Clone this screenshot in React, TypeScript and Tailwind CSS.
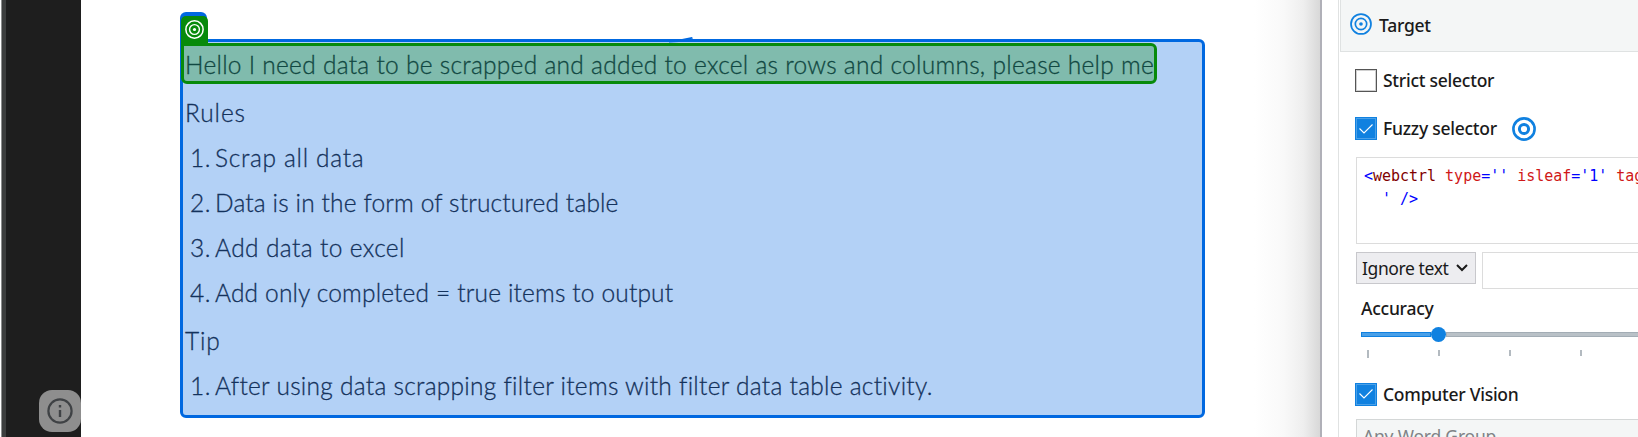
import React from "react";

function Bullseye({ className, dot }: { className: string; dot?: boolean }) {
  return (
    <svg viewBox="0 0 24 24" className={className} fill="none" stroke="currentColor">
      <circle cx="12" cy="12" r={dot ? 10.9 : 10.6} strokeWidth={dot ? 1.9 : 2.6} />
      {dot ? (
        <>
          <circle cx="12" cy="12" r="6.2" strokeWidth="1.8" />
          <circle cx="12" cy="12" r="2" fill="currentColor" stroke="none" />
        </>
      ) : (
        <circle cx="12" cy="12" r="4.6" strokeWidth="3" />
      )}
    </svg>
  );
}

function Check({ on }: { on?: boolean }) {
  if (!on) return <span className="h-[23px] w-[22px] shrink-0 border border-[#555] bg-white shadow-[inset_0_0_0_1px_#d0d0d0]" />;
  return (
    <span className="flex h-[23px] w-[22px] shrink-0 items-center justify-center border border-[#1081e0] bg-[#1081e0] shadow-[inset_0_0_0_1px_#4aa0e8]">
      <svg viewBox="0 0 14 10" className="h-[10px] w-[14px]" fill="none" stroke="white" strokeWidth="1.1">
        <path d="M0.5 4.5 L5 9 L13.5 0.5" />
      </svg>
    </span>
  );
}

const label = "whitespace-nowrap font-['Noto_Sans'] font-medium text-[17.5px] tracking-[-0.25px] text-[#1a1a1a]";

const rules = [
  { text: "Scrap all data", tracking: "tracking-[0.68px]" },
  { text: "Data is in the form of structured table", tracking: "tracking-[0.14px]" },
  { text: "Add data to excel", tracking: "tracking-[0.38px]" },
  { text: "Add only completed = true items to output", tracking: "tracking-[0.16px]" },
];

export default function App() {
  return (
    <div className="flex h-[437px] w-[1638px] overflow-hidden bg-white">
      <aside className="flex w-[81px] shrink-0 flex-col items-end justify-end border-l border-white bg-[#1e1e1e] pb-[5px] shadow-[inset_1px_0_0_#8c8e8e,inset_5px_0_0_#3c3e3e]">
        <span className="flex size-[42px] items-center justify-center rounded-[13px] bg-[#8e8e8e] text-[#3f4245]">
          <svg viewBox="0 0 26 26" className="size-[26px]" fill="none" stroke="currentColor" strokeWidth="2.2">
            <circle cx="13" cy="13" r="11.6" />
            <path d="M13 12v7M13 7v2.5" strokeWidth="2.4" />
          </svg>
        </span>
      </aside>

      <main className="flex min-w-0 flex-1 pl-[99px]">
        <div className="relative mt-[39px] h-[379px] w-[1025px] shrink-0 rounded-[6px] rounded-tl-none border-[3px] border-[#0068e0] bg-[#b3d1f6] font-['Lato'] text-[24.5px] font-light leading-[45px] text-[#14325c] [-webkit-text-stroke:0.3px_currentColor]">
          <span className="absolute left-[-3px] top-[-30px] h-[30px] w-[27px] rounded-t-[6px] bg-[#0068e0]" />
          <svg viewBox="0 0 24 6" className="absolute left-[486px] top-[-5px] h-[6px] w-[24px]">
            <path d="M0 3 L13 2 L23 0 L24 1.5 L10 5 L0 5.5Z" fill="#0068e0" />
          </svg>
          <div className="relative ml-[-2px] mt-px flex h-[41px] w-[976px] items-center rounded-[6px] rounded-tl-none border-[3px] border-[#078a0b] bg-[#80bbad] pl-px pt-[2px] text-[#114842]">
            <span className="absolute left-[-3px] top-[-30px] flex h-[30px] w-[27px] items-center justify-center rounded-t-[5px] bg-[#078a0b] text-white">
              <Bullseye dot className="mt-[-3px] size-[19px]" />
            </span>
            <p className="whitespace-nowrap tracking-[0.28px]">Hello I need data to be scrapped and added to excel as rows and columns, please help me</p>
          </div>
          <div className="whitespace-nowrap pl-[2px] pt-[6px]">
            <p className="tracking-[0.9px]">Rules</p>
            <ol className="pl-[5px]">
              {rules.map((rule, i) => (
                <li key={rule.text} className="flex">
                  <span className="w-[25px] shrink-0 tracking-[0.6px]">{i + 1}.</span>
                  <span className={rule.tracking}>{rule.text}</span>
                </li>
              ))}
            </ol>
            <p className="mt-[3px] tracking-[0.8px]">Tip</p>
            <div className="flex pl-[5px]">
              <span className="w-[25px] shrink-0 tracking-[0.6px]">1.</span>
              <span className="tracking-[0.27px]">After using data scrapping filter items with filter data table activity.</span>
            </div>
          </div>
        </div>
        <div className="ml-auto w-[66px] bg-linear-[90deg,#ffffff_0%,#f9f9f9_45%,#eeeeee_75%,#d8d8d8_100%]" />
      </main>

      <aside className="flex w-[318px] shrink-0 border-l-2 border-[#b0b0b8]">
        <div className="ml-[16px] flex-1 border-l border-[#e0e2e2] pl-px">
          <header className="flex h-[52px] items-start border-b border-l border-[#dfe2e2] bg-[#f4f6f6] pl-[9px]">
            <Bullseye dot className="mt-[13px] size-[22px] text-[#1081e0]" />
            <span className={label + " ml-[7px] mt-[9px] leading-[32px]"}>Target</span>
          </header>
          <div className="pl-[15px]">
            <div className="mt-[17px] flex h-[23px] items-center">
              <Check />
              <span className={label + " ml-[6px] mt-[-2px] leading-[24px]"}>Strict selector</span>
            </div>
            <div className="mt-[25px] flex h-[23px] items-center">
              <Check on />
              <span className={label + " ml-[6px] mt-[-2px] leading-[24px]"}>Fuzzy selector</span>
              <Bullseye className="ml-[15px] size-[24px] text-[#1081e0]" />
            </div>
            <pre className="ml-px mt-[17px] h-[87px] w-[400px] border border-[#dcdcdc] pl-[7px] pt-[7px] font-['DejaVu_Sans_Mono'] text-[15px] leading-[23px] tracking-[-0.02px] text-[#0000ff]">
              {"<"}<span className="text-[#800000]">webctrl</span> <span className="text-[#d01818]">type</span>='' <span className="text-[#d01818]">isleaf</span>='1' <span className="text-[#d01818]">tag</span>{"='P\n  ' />"}
            </pre>
            <div className="ml-px mt-[8px] flex">
              <div className="flex h-[32px] w-[120px] shrink-0 items-center border border-[#c8c8cc] bg-[#ededf0] pl-[5px] font-['Noto_Sans'] text-[17.5px] tracking-[-0.4px] text-[#1a1a1a]">
                <span className="whitespace-nowrap">Ignore text</span>
                <svg viewBox="0 0 12 8" className="ml-auto mr-[7px] h-[8px] w-[12px]" fill="none" stroke="#1a1a1a" strokeWidth="2">
                  <path d="M1 1 L6 6 L11 1" />
                </svg>
              </div>
              <div className="ml-[6px] h-[37px] w-[300px] shrink-0 border border-[#dcdcdc] bg-white" />
            </div>
            <p className={label + " ml-[6px] mt-[5px] leading-[28px]"}>Accuracy</p>
            <div className="ml-[6px] mt-[5px] flex h-[15px] items-center">
              <span className="h-[5px] w-[70px] shrink-0 border border-[#1081e0] bg-[#4aa0e8]" />
              <span className="size-[15px] shrink-0 rounded-full bg-[#1081e0]" />
              <span className="h-[5px] w-[300px] shrink-0 border border-[#a3adb5] bg-[#b9c1c7]" />
            </div>
            <div className="ml-[12px] mt-[8px] flex h-[8px] gap-[69px]">
              <i className="h-[8px] w-[2px] shrink-0 bg-[#b3bac0]" />
              <i className="h-[6px] w-[2px] shrink-0 bg-[#b3bac0]" />
              <i className="h-[6px] w-[2px] shrink-0 bg-[#b3bac0]" />
              <i className="h-[6px] w-[2px] shrink-0 bg-[#b3bac0]" />
            </div>
            <div className="mt-[25px] flex h-[22px] items-center">
              <Check on />
              <span className={label + " ml-[6px] leading-[24px]"}>Computer Vision</span>
            </div>
            <div className="ml-px mt-[14px] h-[36px] w-[400px] border border-[#d4d7d7] bg-[#f4f6f6] pl-[6px] font-['Noto_Sans'] text-[17.5px] leading-[33px] tracking-[-0.2px] text-[#808386]">Any Word Group</div>
          </div>
        </div>
      </aside>
    </div>
  );
}
